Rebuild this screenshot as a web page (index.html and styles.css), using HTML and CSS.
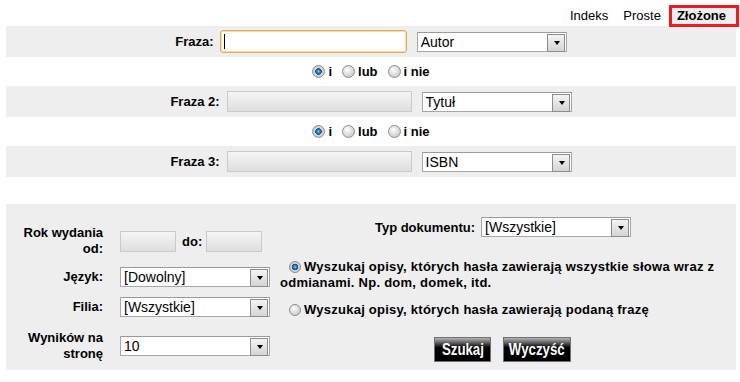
FILE: index.html
```html
<!DOCTYPE html>
<html lang="pl">

<head>
    <meta charset="UTF-8">
    <title>Wyszukiwanie złożone</title>
    <link rel="stylesheet" href="styles.css">
</head>

<body>
    <div id="page">
        <div class="tabs">
            <a href="#" class="tab">Indeks</a>
            <a href="#" class="tab">Proste</a>
            <a href="#" class="tab active">Złożone</a>
        </div>

        <div class="band">
            <label class="lbl" for="f1">Fraza:</label>
            <span class="focusbox"><input type="text" id="f1" class="phrase focused"></span>
            <span class="sel"><select><option>Autor</option></select></span>
        </div>
        <div class="oper">
            <input type="radio" name="op1" class="rd" checked><b>i</b>
            <input type="radio" name="op1" class="rd"><b>lub</b>
            <input type="radio" name="op1" class="rd"><b>i nie</b>
        </div>
        <div class="band">
            <label class="lbl wide" for="f2">Fraza 2:</label>
            <input type="text" id="f2" class="phrase">
            <span class="sel"><select><option>Tytuł</option></select></span>
        </div>
        <div class="oper">
            <input type="radio" name="op2" class="rd" checked><b>i</b>
            <input type="radio" name="op2" class="rd"><b>lub</b>
            <input type="radio" name="op2" class="rd"><b>i nie</b>
        </div>
        <div class="band">
            <label class="lbl wide" for="f3">Fraza 3:</label>
            <input type="text" id="f3" class="phrase">
            <span class="sel"><select><option>ISBN</option></select></span>
        </div>

        <div class="extra">
            <div class="filters">
                <div class="flabel">Rok wydania od:</div>
                <div class="frow">
                    <input type="text" class="year">
                    <b class="to">do:</b>
                    <input type="text" class="year">
                </div>
                <div class="flabel">Język:</div>
                <div class="frow"><span class="sel"><select class="big"><option>[Dowolny]</option></select></span></div>
                <div class="flabel">Filia:</div>
                <div class="frow"><span class="sel"><select class="big"><option>[Wszystkie]</option></select></span></div>
                <div class="flabel last">Wyników na stronę</div>
                <div class="frow last"><span class="sel"><select class="big"><option>10</option></select></span></div>
            </div>

            <div class="options">
                <div class="doctype">
                    <b>Typ dokumentu:</b>
                    <span class="sel"><select class="big"><option>[Wszystkie]</option></select></span>
                </div>
                <p class="opt first"><input type="radio" name="mode" class="rd small" checked>Wyszukaj opisy, których hasła zawierają wszystkie słowa wraz z odmianami. Np. dom, domek, itd.</p>
                <p class="opt"><input type="radio" name="mode" class="rd small">Wyszukaj opisy, których hasła zawierają podaną frazę</p>
                <div class="buttons">
                    <button class="btn"><span>Szukaj</span></button>
                    <button class="btn"><span>Wyczyść</span></button>
                </div>
            </div>
        </div>
    </div>
</body>

</html>
```

FILE: styles.css
```css
* {
    margin: 0;
    padding: 0;
    box-sizing: border-box;
}

body {
    font-family: "Liberation Sans", Arial, sans-serif;
    font-size: 13px;
    color: #000;
    background: #fff;
}

#page {
    margin: 0 4px 0 6px;
}

.tabs {
    height: 26px;
    padding-top: 5px;
    margin-right: -3px;
    display: flex;
    justify-content: flex-end;
    align-items: flex-start;
}

.tab {
    color: #000;
    text-decoration: none;
    line-height: 16px;
    padding-top: 3px;
    margin-right: 15px;
}

.tab:nth-child(2) {
    margin-right: 8px;
}

.tab.active {
    margin-right: 0;
    padding: 0 10px 0 5px;
    font-weight: bold;
    border: 3px solid #ec1c24;
    background: #eeeeee;
    height: 22px;
}

.band {
    background: #eeeeee;
    height: 31px;
    display: flex;
    justify-content: center;
    align-items: center;
}

.band:first-of-type {
    height: 32px;
}

.lbl {
    font-weight: bold;
    margin-right: 5px;
}

.lbl.wide {
    margin-right: 7px;
}

.phrase {
    width: 185px;
    height: 21px;
    margin-right: 10px;
    border: 1px solid #cacaca;
    background: linear-gradient(#f5f5f5, #dedede);
    font: inherit;
}

.focusbox {
    position: relative;
    display: inline-block;
    margin-right: 10px;
    margin-left: 1px;
}

.focusbox::after {
    content: "";
    position: absolute;
    left: 4px;
    top: 4px;
    width: 1px;
    height: 15px;
    background: #000;
}

.phrase.focused {
    width: 187px;
    height: 23px;
    margin: 0;
    display: block;
    background: #fff;
    border: 1px solid #e4ac50;
    border-radius: 3px;
    box-shadow: 0 0 0 1px #f8dfb0 inset;
    outline: none;
}

.sel {
    position: relative;
    display: inline-block;
    height: 20px;
}

.sel select {
    appearance: none;
    -webkit-appearance: none;
    width: 150px;
    height: 20px;
    border: 1px solid #a7a7a7;
    border-top-color: #9a9a9a;
    background: #fff;
    color: #000;
    font-family: inherit;
    font-size: 14px;
    padding: 0 20px 0 3px;
    display: block;
    border-radius: 0;
}

.sel::after {
    content: "";
    position: absolute;
    right: 2px;
    top: 2px;
    width: 16px;
    height: 16px;
    border: 1px solid #8d8d8d;
    background: linear-gradient(#f4f4f4, #d4d4d4);
    pointer-events: none;
}

.sel::before {
    content: "";
    position: absolute;
    right: 7px;
    top: 9px;
    border-left: 3.5px solid transparent;
    border-right: 3.5px solid transparent;
    border-top: 4px solid #000;
    z-index: 1;
    pointer-events: none;
}

.oper {
    height: 29px;
    display: flex;
    justify-content: center;
    align-items: center;
}

.oper:nth-of-type(2) {
    height: 30px;
}

.oper b {
    margin-right: 10px;
}

.oper b:last-child {
    margin-right: 0;
}

.rd {
    appearance: none;
    -webkit-appearance: none;
    width: 13px;
    height: 13px;
    border-radius: 50%;
    border: 1px solid #8e8e8e;
    background: radial-gradient(circle at 40% 35%, #ffffff 0, #e6e6e6 35%, #bdbdbd 100%);
    margin-right: 3px;
    flex: none;
}

.rd:checked {
    background: radial-gradient(circle at 50% 50%, #8fd0f8 0, #2a86c8 1.5px, #0f4f88 3px, #d8d8d8 3.6px, #bcbcbc 100%);
}

.rd.small {
    width: 12px;
    height: 12px;
    vertical-align: -2px;
    margin: 0 3px 0 9px;
}

.extra {
    margin-top: 27px;
    background: #eeeeee;
    height: 166px;
    display: grid;
    grid-template-columns: 274px 1fr;
}

.filters {
    display: grid;
    grid-template-columns: 97px auto;
    column-gap: 17px;
    row-gap: 10px;
    align-items: center;
    align-content: start;
    padding-top: 21px;
}

.flabel {
    font-weight: bold;
    text-align: right;
    line-height: 16px;
}

.flabel.last,
.frow.last {
    margin-top: 3px;
}

.frow {
    display: flex;
    align-items: center;
}

.year {
    width: 56px;
    height: 21px;
    border: 1px solid #cacaca;
    background: linear-gradient(#f5f5f5, #dedede);
}

.to {
    margin: 0 4px 0 6px;
}

.options {
    display: flex;
    flex-direction: column;
    align-items: center;
    padding: 13px 10px 0 0;
}

.doctype {
    display: flex;
    align-items: center;
    height: 20px;
}

.doctype b {
    margin-right: 6px;
}

.opt {
    align-self: stretch;
    font-weight: bold;
    line-height: 16px;
    letter-spacing: 0.25px;
    margin-top: 11px;
}

.opt.first {
    margin-top: 22px;
}

.buttons {
    display: flex;
    gap: 12px;
    margin-top: 19px;
    margin-right: 1px;
}

.btn {
    height: 25px;
    padding: 0;
    border: 1px solid #727272;
    background: linear-gradient(#b4b4b4 0, #6a6a6a 18%, #000 42%, #000 100%);
    color: #fff;
    font-family: "Liberation Sans", Arial, sans-serif;
    font-weight: bold;
    font-size: 17px;
    display: flex;
    justify-content: center;
    align-items: center;
}

.btn span {
    display: inline-block;
    transform: scaleX(0.78);
}

.btn:first-child {
    width: 57px;
}

.btn:last-child {
    width: 68px;
}
```
